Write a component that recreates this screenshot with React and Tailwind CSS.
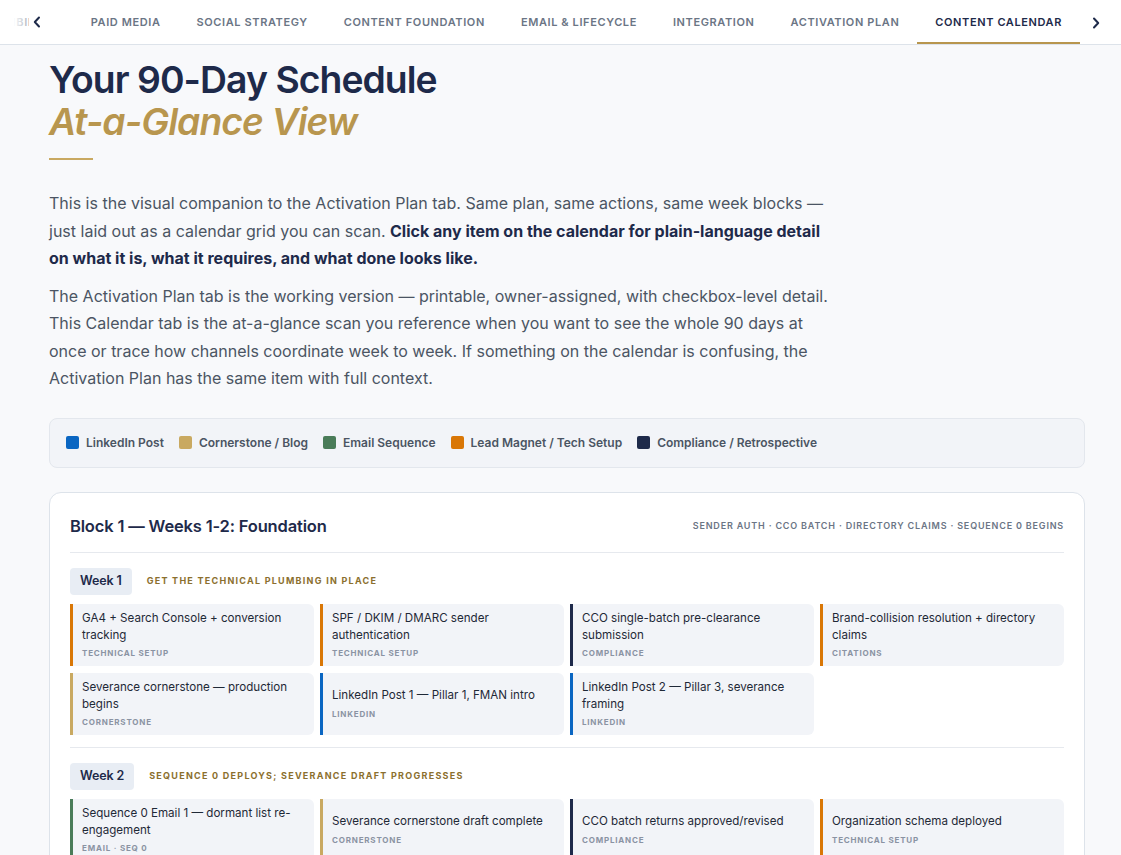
import React from "react";

const tabs = ["AI VISIBILITY", "PAID MEDIA", "SOCIAL STRATEGY", "CONTENT FOUNDATION", "EMAIL & LIFECYCLE", "INTEGRATION", "ACTIVATION PLAN", "CONTENT CALENDAR"];

const legend = [
  ["LinkedIn Post", "bg-[#0a66c2]"],
  ["Cornerstone / Blog", "bg-[#c9a961]"],
  ["Email Sequence", "bg-[#4a7c59]"],
  ["Lead Magnet / Tech Setup", "bg-[#d97706]"],
  ["Compliance / Retrospective", "bg-[#1e2a4a]"],
];

const border = {
  li: "border-[#0a66c2]",
  cs: "border-[#c9a961]",
  em: "border-[#4a7c59]",
  tech: "border-[#d97706]",
  comp: "border-[#1e2a4a]",
};

const weeks = [
  {
    label: "Week 1",
    theme: "GET THE TECHNICAL PLUMBING IN PLACE",
    items: [
      ["GA4 + Search Console + conversion tracking", "TECHNICAL SETUP", "tech"],
      ["SPF / DKIM / DMARC sender authentication", "TECHNICAL SETUP", "tech"],
      ["CCO single-batch pre-clearance submission", "COMPLIANCE", "comp"],
      ["Brand-collision resolution + directory claims", "CITATIONS", "tech"],
      ["Severance cornerstone — production begins", "CORNERSTONE", "cs"],
      ["LinkedIn Post 1 — Pillar 1, FMAN intro", "LINKEDIN", "li"],
      ["LinkedIn Post 2 — Pillar 3, severance framing", "LINKEDIN", "li"],
    ],
  },
  {
    label: "Week 2",
    theme: "SEQUENCE 0 DEPLOYS; SEVERANCE DRAFT PROGRESSES",
    items: [
      ["Sequence 0 Email 1 — dormant list re-engagement", "EMAIL · SEQ 0", "em"],
      ["Severance cornerstone draft complete", "CORNERSTONE", "cs"],
      ["CCO batch returns approved/revised", "COMPLIANCE", "comp"],
      ["Organization schema deployed", "TECHNICAL SETUP", "tech"],
    ],
  },
];

function Chevron({ dir }) {
  return (
    <svg width="8" height="12" viewBox="0 0 8 12" fill="none" stroke="#1e2a4a" strokeWidth="2" strokeLinecap="round" strokeLinejoin="round">
      {dir === "left" ? <path d="M6 1.5 L1.8 6 L6 10.5" /> : <path d="M2 1.5 L6.2 6 L2 10.5" />}
    </svg>
  );
}

export default function App() {
  return (
    <div className="min-h-screen bg-[#f8f9fb]" style={{ fontFamily: "Inter, 'Liberation Sans', sans-serif" }}>
      <nav className="flex h-[45px] items-stretch border-b border-[#dde3ea] bg-white pr-[9px]">
        <div className="relative flex flex-1 justify-end overflow-hidden">
          {tabs.map((t, i) => {
            const active = i === tabs.length - 1;
            return (
              <div
                key={t}
                className={`flex shrink-0 items-center whitespace-nowrap px-[18px] text-[11px] font-semibold tracking-[0.055em] ${
                  active ? "border-b-2 border-[#b8964e] pt-[2px] text-[#1e2a4a]" : "text-[#6b7585]"
                }`}
              >
                {t}
              </div>
            );
          })}
          <div className="absolute left-0 top-0 h-full w-[30px] bg-gradient-to-r from-white from-45% to-white/40" />
          <div className="absolute left-[29px] top-0 flex h-full w-[26px] items-center bg-white pl-[4px] pb-[1px]">
            <Chevron dir="left" />
          </div>
        </div>
        <div className="flex w-[32px] items-center justify-center pt-[1px]">
          <Chevron dir="right" />
        </div>
      </nav>

      <main className="pl-[49px] pr-[36px] pb-10">
        <h1 className="pt-[14px] text-[37.3px] font-semibold leading-[42px] tracking-[-0.025em] text-[#1e2a4a]">
          Your 90-Day Schedule
          <br />
          <span className="italic text-[#b8964e]">At-a-Glance View</span>
        </h1>
        <div className="mt-[15px] h-[2px] w-[44px] bg-[#c9a961]" />

        <p className="mt-[30px] max-w-[782px] text-[16px] leading-[27.5px] text-[#4b5563]">
          This is the visual companion to the Activation Plan tab. Same plan, same actions, same week blocks — just laid out as a calendar grid you can scan.{" "}
          <strong className="font-bold text-[#1e2a4a]">Click any item on the calendar for plain-language detail on what it is, what it requires, and what done looks like.</strong>
        </p>
        <p className="mt-[10px] max-w-[782px] text-[16px] leading-[27.5px] text-[#4b5563]">
          The Activation Plan tab is the working version — printable, owner-assigned, with checkbox-level detail. This Calendar tab is the at-a-glance scan you reference when you want to see the whole 90 days at once or trace how channels coordinate week to week. If something on the calendar is confusing, the Activation Plan has the same item with full context.
        </p>

        <div className="mt-[25px] flex h-[50px] items-center gap-[15px] rounded-lg border border-[#e3e7ed] bg-[#f2f4f8] px-[16px]">
          {legend.map(([l, c]) => (
            <div key={l} className="flex items-center gap-[7px]">
              <span className={`h-[13px] w-[13px] rounded-[2px] ${c}`} />
              <span className="text-[12px] font-semibold text-[#4b5563]">{l}</span>
            </div>
          ))}
        </div>

        <section className="mt-[24px] rounded-xl border border-[#dde3ea] bg-white px-[20px] pt-[20px]">
          <div className="flex items-center justify-between border-b border-[#e6e9ee] pb-[13px]">
            <h2 className="text-[16.5px] font-semibold leading-[26px] tracking-[-0.01em] text-[#1e2a4a]">Block 1 — Weeks 1-2: Foundation</h2>
            <span className="text-[9px] font-semibold tracking-[0.09em] text-[#6b7585]">
              SENDER AUTH · CCO BATCH · DIRECTORY CLAIMS · SEQUENCE 0 BEGINS
            </span>
          </div>

          {weeks.map((w, wi) => (
            <div key={w.label} className={`pt-[15px] pb-[12px] ${wi === 0 ? "border-b border-[#e6e9ee]" : ""}`}>
              <div className="flex items-center gap-[15px]">
                <span className="flex h-[27px] items-center rounded-[4px] bg-[#e8edf4] px-[10px] text-[12.5px] font-semibold tracking-[-0.01em] text-[#1e2a4a]">
                  {w.label}
                </span>
                <span className="text-[9px] font-bold tracking-[0.14em] text-[#8b6f2e]">{w.theme}</span>
              </div>
              <div className="mt-[9px] grid grid-cols-4 gap-x-[6px] gap-y-[7px]">
                {w.items.map(([title, lab, k]) => (
                  <div
                    key={title}
                    className={`flex min-h-[62px] flex-col justify-center rounded-r-[6px] border-l-[3px] bg-[#f2f4f8] py-[6px] pl-[9px] pr-[10px] ${border[k]}`}
                  >
                    <div className="text-[11.6px] leading-[16.5px] text-[#1f2937]">{title}</div>
                    <div className="mt-[5px] text-[8px] font-bold leading-[11px] tracking-[0.1em] text-[#8a93a3]">{lab}</div>
                  </div>
                ))}
              </div>
            </div>
          ))}
        </section>
      </main>
    </div>
  );
}
